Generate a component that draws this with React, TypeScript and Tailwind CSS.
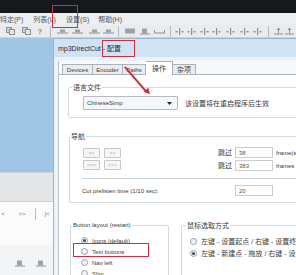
import React from "react";

const G = "#8b9097";

function Doc() {
  return (
    <svg width="9" height="8" viewBox="0 0 9 8">
      <rect x="0.5" y="0.5" width="5" height="5" fill="#cfd2d6" stroke={G} />
      <rect x="3.5" y="2.5" width="5" height="5" fill="#e2e4e7" stroke={G} />
    </svg>
  );
}
function Wave() {
  return (
    <svg width="11" height="6" viewBox="0 0 11 6">
      <rect x="0" y="4.5" width="11" height="1" fill={G} />
      <rect x="3" y="1.5" width="5" height="3" fill="#9ea3aa" />
    </svg>
  );
}
function Block() {
  return (
    <svg width="10" height="6" viewBox="0 0 10 6">
      <rect x="0" y="0.5" width="10" height="5" fill="#9ea3aa" />
    </svg>
  );
}
function BlockB() {
  return (
    <svg width="10" height="7" viewBox="0 0 10 7">
      <rect x="2" y="0.5" width="5" height="5" fill="#9ea3aa" />
      <rect x="0" y="5.5" width="10" height="1" fill={G} />
    </svg>
  );
}
function Base() {
  return (
    <svg width="11" height="6" viewBox="0 0 11 6">
      <rect x="0" y="4.5" width="11" height="1" fill={G} />
      <rect x="0" y="2" width="1" height="3" fill={G} />
      <rect x="10" y="2" width="1" height="3" fill={G} />
    </svg>
  );
}
function Mark() {
  return (
    <svg width="9" height="7" viewBox="0 0 9 7">
      <rect x="4" y="0" width="1.2" height="7" fill={G} />
      <rect x="0.5" y="3" width="2" height="1.5" fill={G} />
      <rect x="6.5" y="3" width="2" height="1.5" fill={G} />
    </svg>
  );
}
function Up() {
  return (
    <svg width="9" height="8" viewBox="0 0 9 8">
      <rect x="0" y="6.5" width="9" height="1" fill={G} />
      <rect x="4" y="1" width="1" height="5" fill={G} />
      <path d="M2.5 3 L4.5 0.5 L6.5 3 Z" fill={G} />
    </svg>
  );
}
function Sep() {
  return <div className="w-px h-[11px] bg-[#b3b8bf]" />;
}

function Radio({ checked }: { checked?: boolean }) {
  return (
    <div className="w-[7px] h-[7px] rounded-full border border-[#9aa0a6] bg-[#f1f2f3] flex items-center justify-center flex-none">
      {checked ? <div className="w-[3px] h-[3px] rounded-full bg-[#3f4a55]" /> : null}
    </div>
  );
}

function NavBtn({ label }: { label: string }) {
  return (
    <div className="w-[17px] h-[10px] border border-[#c4c8cc] rounded-[1px] bg-[#f7f7f7] flex items-center justify-center text-[5px] text-[#9a9ea3] leading-none">
      {label}
    </div>
  );
}

function Input({ value }: { value: string }) {
  return (
    <div className="w-[38px] h-[11px] border border-[#c9cdd1] bg-white flex items-center pl-[3px] text-[6px] text-[#555555] leading-none">
      {value}
    </div>
  );
}

function Radios() {
  return null;
}

export default function App() {
  return (
    <div className="relative w-[296px] h-[275px] overflow-hidden bg-[#f3f4f5] font-[Liberation_Sans,Noto_Sans_CJK_SC,sans-serif] text-[#3a3a3a]">
      {/* main window */}
      <div className="h-[13px] bg-[#15181d]" />
      <div className="h-[12px] bg-[#eceef1] flex items-center text-[7px] text-[#555555] leading-none">
        <span>特定(P)</span>
        <span className="ml-[10px]">列表(L)</span>
        <span className="ml-[10px]">设置(S)</span>
        <span className="ml-[9px]">帮助(H)</span>
      </div>
      <div className="h-[13px] bg-[#e9ebee] border-b border-[#cfd4da] flex items-center">
        <div className="w-[15px] flex justify-center ml-[3px]"><Doc /></div>
        <div className="w-[16px] flex justify-center"><Doc /></div>
        <div className="w-[12px] flex justify-center text-[7px] text-[#7d828a] leading-none font-bold">?</div>
        <div className="w-[9px] flex justify-center"><Sep /></div>
        <div className="w-[14px] flex justify-center"><Wave /></div>
        <div className="w-[17px] flex justify-center"><Wave /></div>
        <div className="w-[16px] flex justify-center"><Wave /></div>
        <div className="w-[12px] flex justify-center"><Wave /></div>
        <div className="w-[9px] flex justify-center"><Sep /></div>
        <div className="w-[13px] flex justify-center"><Block /></div>
        <div className="w-[17px] flex justify-center"><BlockB /></div>
        <div className="w-[13px] flex justify-center"><Base /></div>
        <div className="w-[8px] flex justify-center"><Sep /></div>
        <div className="w-[11px] flex justify-center"><Mark /></div>
        <div className="w-[13px] flex justify-center"><Mark /></div>
        <div className="w-[12px] flex justify-center"><Mark /></div>
        <div className="w-[13px] flex justify-center"><Mark /></div>
        <div className="w-[14px] flex justify-center"><Mark /></div>
        <div className="w-[14px] flex justify-center"><Mark /></div>
        <div className="w-[13px] flex justify-center"><Mark /></div>
        <div className="w-[9px] flex justify-center"><Sep /></div>
        <div className="w-[10px] flex justify-center"><Up /></div>
        <div className="w-[13px] flex justify-center"><Up /></div>
      </div>
      <div className="flex h-[237px]">
        <div className="w-[53px] flex-none flex flex-col">
          <div className="h-[134px] bg-[#a1c6e5]" />
          <div className="h-[29px] bg-[#e5e6e8] border-t border-[#c9d0d7]" />
          <div className="h-[44px] bg-[#fbfbfb] border-t border-[#cfd2d5] flex items-start pt-[9px] text-[6px] text-[#6a6e73] leading-none">
            <span className="ml-[1px]">&lt;</span>
            <span className="ml-[14px]">&gt;&gt;</span>
            <div className="ml-[9px] w-px h-[12px] -mt-[3px] bg-[#b8bcc0]" />
            <span className="ml-[9px]">|&lt;</span>
          </div>
          <div className="flex-1 bg-[#f3f4f5] flex items-start pt-[15px]">
            <div className="ml-[15px]"><BlockB /></div>
            <div className="ml-[11px]"><BlockB /></div>
          </div>
        </div>

        {/* dialog window */}
        <div className="flex-1 min-w-0 border-l border-t border-[#9fb3c7] bg-[#eef3f8] flex flex-col">
          <div className="h-[18px] bg-[#cfe3f4] flex items-center pl-[4px] text-[7px] text-[#1e2a36] leading-none flex-none whitespace-nowrap">
            mp3DirectCut - 配置
          </div>
          <div className="flex-1 pl-[4px] pt-[4px] flex">
            <div className="flex-1 min-w-0 border-l border-[#b9c3cd] bg-[#f7f8f9] flex flex-col">
              <div className="h-[13px] flex items-end pl-[3px] text-[6px] leading-none flex-none">
                <div className="w-[31px] h-[10px] border border-b-0 border-[#aab2ba] bg-[#ebecee] flex items-center justify-center">Devices</div>
                <div className="w-[30px] h-[10px] border border-b-0 border-l-0 border-[#aab2ba] bg-[#ebecee] flex items-center justify-center">Encoder</div>
                <div className="w-[23px] h-[10px] border border-b-0 border-l-0 border-[#aab2ba] bg-[#ebecee] flex items-center justify-center">Paths</div>
                <div className="relative z-10 w-[27px] h-[14px] -mb-px border border-b-0 border-l-0 border-[#aab2ba] bg-white flex items-center justify-center text-[7px]">操作</div>
                <div className="w-[23px] h-[10px] border border-b-0 border-l-0 border-[#aab2ba] bg-[#ebecee] flex items-center justify-center text-[7px]">杂项</div>
              </div>
              <div className="flex-1 border-t border-[#aab2ba] bg-white flex flex-col w-[290px]">
                <div className="ml-[9px] mt-[8px] flex flex-col">
                  <div className="h-[8px] flex items-center pl-[4px] text-[7px] leading-none relative z-10"><span className="bg-white px-[1px]">语言文件</span></div>
                  <div className="-mt-[4px] border border-[#d3dbe2] rounded-[2px] pl-[14px] pt-[8px] pb-[7px] flex items-center">
                    <div className="w-[95px] h-[14px] border border-[#b6bbc1] rounded-[1px] bg-[#f6f7f8] flex items-center justify-between pl-[3px] pr-[5px] text-[6px] leading-none">
                      <span>ChineseSimp</span>
                      <svg width="5" height="3" viewBox="0 0 5 3"><path d="M0 0 L5 0 L2.5 3 Z" fill="#222" /></svg>
                    </div>
                    <span className="ml-[7px] text-[7px] leading-none whitespace-nowrap">该设置将在重启程序后生效</span>
                  </div>
                </div>

                <div className="ml-[10px] mt-[14px] flex flex-col">
                  <div className="h-[8px] flex items-center pl-[1px] text-[7px] leading-none relative z-10"><span className="bg-white px-[1px]">导航</span></div>
                  <div className="-mt-[4px] border border-[#d3dbe2] rounded-[2px] pt-[10px] pb-[6px]">
                    <div className="flex">
                      <div className="w-[148px] pl-[13px] flex flex-col gap-[2px] pt-[1px]">
                        <div className="flex gap-[4px]"><NavBtn label="<<" /><NavBtn label=">>" /></div>
                        <div className="flex gap-[4px]"><NavBtn label="<<<" /><NavBtn label=">>>" /></div>
                      </div>
                      <div className="flex flex-col gap-[2px]">
                        <div className="flex items-center">
                          <span className="w-[17px] text-[7px] leading-none">跳过</span>
                          <Input value="38" />
                          <span className="ml-[3px] text-[6px] leading-none whitespace-nowrap">frame(s)</span>
                        </div>
                        <div className="flex items-center">
                          <span className="w-[17px] text-[7px] leading-none">跳过</span>
                          <Input value="383" />
                          <span className="ml-[3px] text-[6px] leading-none">frames</span>
                        </div>
                      </div>
                    </div>
                    <div className="ml-[12px] mt-[7px] h-px bg-[#d0d5da]" />
                    <div className="mt-[6px] flex items-center">
                      <span className="w-[165px] pl-[12px] text-[6px] leading-none">Cut prelisten time (1/10 sec):</span>
                      <Input value="20" />
                    </div>
                  </div>
                </div>

                <div className="flex mt-[18px]">
                  <div className="ml-[11px] w-[99px] flex flex-col">
                    <div className="h-[8px] flex items-center pl-[2px] text-[6px] leading-none relative z-10"><span className="bg-white px-[1px]">Button layout (restart)</span></div>
                    <div className="-mt-[4px] h-[60px] border border-[#d3dbe2] rounded-[2px] pl-[10px] pt-[9px]">
                      <div className="h-[11px] flex items-center gap-[4px] text-[6px] leading-none"><Radio checked /><span>Icons (default)</span></div>
                      <div className="h-[11px] flex items-center gap-[4px] text-[6px] leading-none"><Radio /><span>Text buttons</span></div>
                      <div className="h-[11px] flex items-center gap-[4px] text-[6px] leading-none"><Radio /><span>Nav left</span></div>
                      <div className="h-[11px] flex items-center gap-[4px] text-[6px] leading-none"><Radio /><span>Slim</span></div>
                    </div>
                  </div>
                  <div className="ml-[12px] flex-1 flex flex-col">
                    <div className="h-[8px] flex items-center pl-[5px] text-[7px] leading-none relative z-10"><span className="bg-white px-[1px]">鼠标选取方式</span></div>
                    <div className="-mt-[4px] h-[60px] border border-[#d3dbe2] rounded-[2px] pl-[8px] pt-[9px]">
                      <div className="h-[12px] flex items-center gap-[4px] text-[7px] leading-none whitespace-nowrap"><Radio /><span>左键 - 设置起点 / 右键 - 设置终点</span></div>
                      <div className="h-[12px] flex items-center gap-[4px] text-[7px] leading-none whitespace-nowrap"><Radio checked /><span>左键 - 新建点 - 拖放 / 右键 - 设置终点</span></div>
                    </div>
                  </div>
                </div>
              </div>
            </div>
          </div>
        </div>
      </div>

      {/* annotations */}
      <div className="absolute left-[52px] top-[5px] w-[26px] h-[23px] border-[1.5px] border-[#c33345]" />
      <div className="absolute left-[102px] top-[40px] w-[33px] h-[17px] border-[1.5px] border-[#c33345]" />
      <div className="absolute left-[73px] top-[243px] w-[76px] h-[14px] border-[1.5px] border-[#c33345]" />
      <div className="absolute left-[125px] top-[66px] w-[34px] h-[1.5px] bg-[#c8303f] origin-left rotate-[49deg]" />
      <div className="absolute left-[145px] top-[89px] w-0 h-0 border-l-[3px] border-r-[3px] border-t-[6px] border-l-transparent border-r-transparent border-t-[#c8303f] -rotate-[41deg]" />
    </div>
  );
}
